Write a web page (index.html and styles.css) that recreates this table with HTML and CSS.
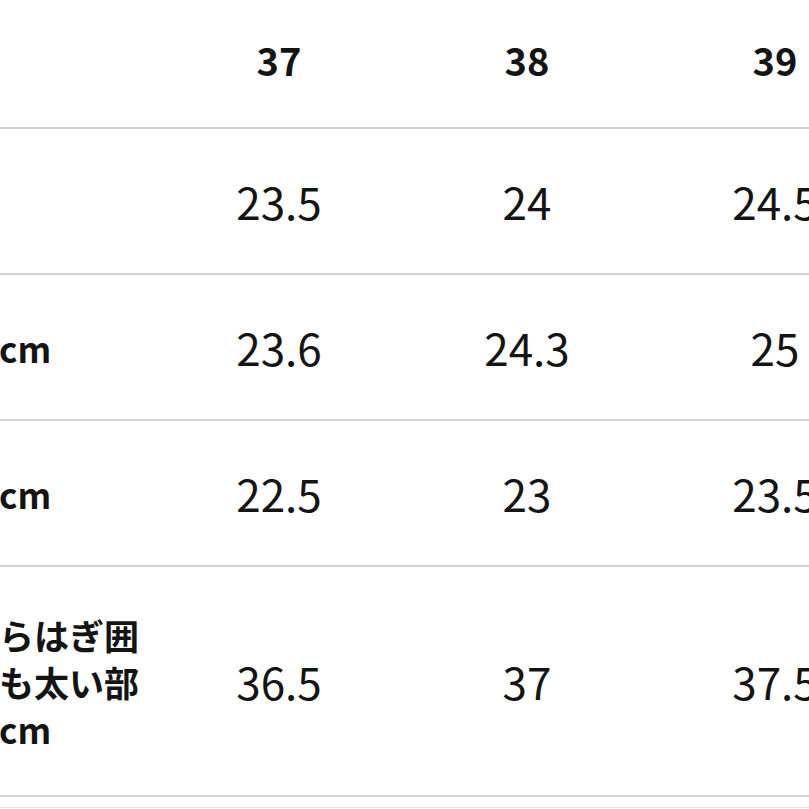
FILE: index.html
```html
<!DOCTYPE html>
<html lang="ja">
<head>
<meta charset="utf-8">
<title>サイズ表</title>
<link rel="stylesheet" href="styles.css">
</head>
<body>
<div class="size-table">
  <div class="row head">
    <div class="cell label"></div>
    <div class="cell">37</div>
    <div class="cell">38</div>
    <div class="cell">39</div>
  </div>
  <div class="row">
    <div class="cell label">JP</div>
    <div class="cell">23.5</div>
    <div class="cell">24</div>
    <div class="cell">24.5</div>
  </div>
  <div class="row">
    <div class="cell label">足長cm</div>
    <div class="cell">23.6</div>
    <div class="cell">24.3</div>
    <div class="cell">25</div>
  </div>
  <div class="row">
    <div class="cell label">足囲cm</div>
    <div class="cell">22.5</div>
    <div class="cell">23</div>
    <div class="cell">23.5</div>
  </div>
  <div class="row tall">
    <div class="cell label">ふくらはぎ囲<br>（最も太い部<br>分）cm</div>
    <div class="cell">36.5</div>
    <div class="cell">37</div>
    <div class="cell">37.5</div>
  </div>
  <div class="tail"></div>
</div>
</body>
</html>
```
FILE: styles.css
```css
html, body {
  margin: 0;
  padding: 0;
  background: #ffffff;
  overflow: hidden;
}

body {
  font-family: "Noto Sans CJK JP", "Noto Sans", sans-serif;
  color: #141414;
}

.size-table {
  margin-left: -100px;
  width: 1000px;
}

.row {
  display: grid;
  grid-template-columns: 255px 248px 248px 248px;
  height: 144px;
  border-bottom: 2px solid #d3d3d3;
  align-items: center;
}

.row.head {
  height: 127px;
}

.row.tall {
  height: 228px;
}

.cell {
  text-align: center;
  font-size: 44px;
  font-weight: 400;
  line-height: 1.2;
}

.row.head .cell {
  font-size: 38px;
  font-weight: 700;
  padding-bottom: 8px;
}

.cell.label {
  text-align: left;
  padding-left: 29px;
  padding-right: 4px;
  font-size: 35px;
  font-weight: 700;
  line-height: 47px;
  white-space: nowrap;
}

.tail {
  height: 10px;
  border-bottom: 1px solid #e4e4e4;
}
```
